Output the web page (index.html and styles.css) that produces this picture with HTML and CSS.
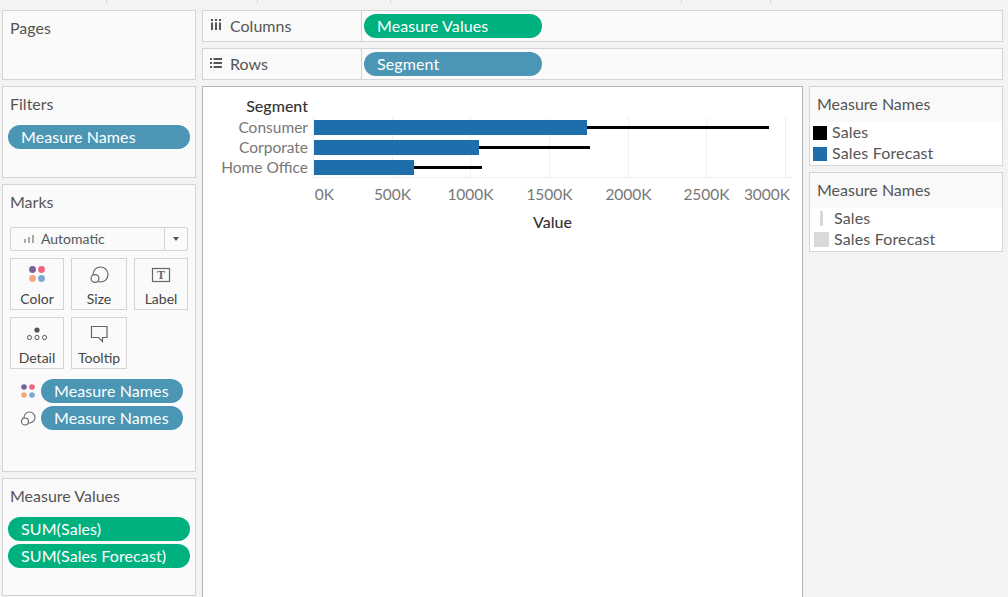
FILE: index.html
```html
<!DOCTYPE html>
<html lang="en">
<head>
<meta charset="utf-8">
<title>Sheet</title>
<link rel="stylesheet" href="styles.css">
</head>
<body>
<div class="ticks"><i class="t1"></i><i class="t2"></i><i class="t3"></i><i class="t4"></i><i class="t5"></i></div>
<div class="app">
  <aside class="left">
    <section class="card pages"><h2>Pages</h2></section>
    <section class="card filters"><h2>Filters</h2><div class="pill blue">Measure Names</div></section>
    <section class="card marks">
      <h2>Marks</h2>
      <div class="select">
        <svg class="auto-ic" width="10" height="8" viewBox="0 0 10 8"><path d="M0 4h2v4H0zM4 2h2v6H4zM8 0h2v8H8z" fill="#aaa"/></svg>
        <span class="select-text">Automatic</span>
        <span class="caret"></span>
      </div>
      <div class="mark-grid">
        <div class="mbtn">
          <svg width="24" height="24" viewBox="0 0 24 24"><circle cx="7.500" cy="7.500" r="3.400" fill="#7b6294"/><circle cx="16.500" cy="7.500" r="3.400" fill="#ef6480"/><circle cx="7.500" cy="16.500" r="3.400" fill="#f4a97d"/><circle cx="16.500" cy="16.500" r="3.400" fill="#7ba7d1"/></svg>
          <span>Color</span>
        </div>
        <div class="mbtn">
          <svg width="24" height="24" viewBox="0 0 24 24"><circle cx="13.500" cy="12.500" r="7.500" fill="none" stroke="#666" stroke-width="1.200"/><circle cx="8" cy="16.500" r="3.900" fill="#fafafa" stroke="#666" stroke-width="1.200"/></svg>
          <span>Size</span>
        </div>
        <div class="mbtn">
          <svg width="24" height="24" viewBox="0 0 24 24"><rect x="3.500" y="6.500" width="17" height="13" fill="none" stroke="#666" stroke-width="1.200"/><text x="12" y="17" text-anchor="middle" class="t-glyph">T</text></svg>
          <span>Label</span>
        </div>
        <div class="mbtn">
          <svg width="24" height="24" viewBox="0 0 24 24"><circle cx="12" cy="9" r="2.600" fill="#555"/><circle cx="4.500" cy="16.500" r="2.100" fill="none" stroke="#555"/><circle cx="12" cy="16.500" r="2.100" fill="none" stroke="#555"/><circle cx="19.500" cy="16.500" r="2.100" fill="none" stroke="#555"/></svg>
          <span>Detail</span>
        </div>
        <div class="mbtn">
          <svg width="24" height="24" viewBox="0 0 24 24"><path d="M4.500 5.500h15.500v11h-4.500v4l-3.800-4H4.500z" fill="none" stroke="#666" stroke-width="1.200"/></svg>
          <span>Tooltip</span>
        </div>
      </div>
      <div class="enc">
        <svg width="18" height="18" viewBox="0 0 18 18"><circle cx="5" cy="5" r="2.800" fill="#7b6294"/><circle cx="13" cy="5" r="2.800" fill="#ef6480"/><circle cx="5" cy="13" r="2.800" fill="#f4a97d"/><circle cx="13" cy="13" r="2.800" fill="#7ba7d1"/></svg>
        <div class="pill blue">Measure Names</div>
      </div>
      <div class="enc">
        <svg width="18" height="18" viewBox="0 0 18 18"><circle cx="10.500" cy="8.500" r="5.500" fill="none" stroke="#666" stroke-width="1.100"/><circle cx="6" cy="12.500" r="3.500" fill="#fafafa" stroke="#666" stroke-width="1.100"/></svg>
        <div class="pill blue">Measure Names</div>
      </div>
    </section>
    <section class="card values">
      <h2>Measure Values</h2>
      <div class="pill green">SUM(Sales)</div>
      <div class="pill green">SUM(Sales Forecast)</div>
    </section>
  </aside>
  <main class="main">
    <div class="shelf">
      <div class="shelf-head">
        <svg width="12" height="12" viewBox="0 0 12 12"><path d="M1 0h2v2H1zM5 0h2v2H5zM9 0h2v2H9zM1 3.500h2V11H1zM5 3.500h2V11H5zM9 3.500h2V11H9z" fill="#555"/></svg>
        <span>Columns</span>
      </div>
      <div class="shelf-body"><div class="pill green wide">Measure Values</div></div>
    </div>
    <div class="shelf">
      <div class="shelf-head">
        <svg width="12" height="12" viewBox="0 0 12 12"><path d="M0 1h2v2H0zM0 5h2v2H0zM0 9h2v2H0zM3.500 1H12v2H3.500zM3.500 5H12v2H3.500zM3.500 9H12v2H3.500z" fill="#555"/></svg>
        <span>Rows</span>
      </div>
      <div class="shelf-body"><div class="pill blue wide">Segment</div></div>
    </div>
    <div class="workspace">
      <div class="view">
        <svg class="chart" width="599" height="160" viewBox="203 87 599 160">
          <g stroke="#f0f0f0" fill="none">
            <path d="M313.500 117V177M392.500 117V177M470.500 117V177M549.500 117V177M628.500 117V177M706.500 117V177M785.500 117V177M313 177.500H792"/>
          </g>
          <g fill="#000">
            <rect x="314" y="126" width="455" height="3"/>
            <rect x="314" y="146" width="276" height="3"/>
            <rect x="314" y="166" width="168" height="3"/>
          </g>
          <g fill="#1f6eac">
            <rect x="314" y="120" width="273" height="15"/>
            <rect x="314" y="140" width="165" height="15"/>
            <rect x="314" y="160" width="100" height="15"/>
          </g>
          <text x="308" y="112" text-anchor="end" class="head">Segment</text>
          <g text-anchor="end" class="lab">
            <text x="308" y="133">Consumer</text>
            <text x="308" y="153">Corporate</text>
            <text x="308" y="173">Home Office</text>
          </g>
          <g text-anchor="middle" class="lab">
            <text x="324.500" y="200">0K</text>
            <text x="392.500" y="200">500K</text>
            <text x="470.500" y="200">1000K</text>
            <text x="549.500" y="200">1500K</text>
            <text x="628.500" y="200">2000K</text>
            <text x="706.500" y="200">2500K</text>
            <text x="767" y="200">3000K</text>
          </g>
          <text x="552.500" y="228" text-anchor="middle" class="head">Value</text>
        </svg>
      </div>
      <div class="legends">
        <section class="legend">
          <h2>Measure Names</h2>
          <ul>
            <li><i class="sw black"></i><span>Sales</span></li>
            <li><i class="sw steel"></i><span>Sales Forecast</span></li>
          </ul>
        </section>
        <section class="legend size">
          <h2>Measure Names</h2>
          <ul>
            <li><span class="slot"><i class="thin"></i></span><span>Sales</span></li>
            <li><span class="slot"><i class="fat"></i></span><span>Sales Forecast</span></li>
          </ul>
        </section>
      </div>
    </div>
  </main>
</div>
</body>
</html>
```
FILE: styles.css
```css
* { box-sizing: border-box; }
html, body { margin: 0; height: 597px; overflow: hidden; }
body {
  background: #f3f3f3;
  font-family: Lato, "Open Sans", sans-serif;
  font-size: 16px;
  color: #555;
}
h2 { margin: 0; font-size: 16px; font-weight: 400; color: #555; line-height: 20px; }

.ticks { height: 3px; display: flex; }
.ticks i { display: block; height: 3px; border-right: 1px solid #d4d4d4; }
.t1 { width: 107px; }
.t2 { width: 151px; }
.t3 { width: 133px; }
.t4 { width: 291px; }
.t5 { width: 89px; }

.app {
  display: grid;
  grid-template-columns: 194px 801px;
  column-gap: 6px;
  padding: 7px 0 0 2px;
}
.left { display: flex; flex-direction: column; gap: 6px; }
.card { background: #fafafa; border: 1px solid #d4d4d4; padding: 7px 5px 0 5px; }
.card h2 { padding-left: 2px; }
.pages { height: 70px; }
.filters { height: 92px; }
.filters h2 { margin-bottom: 11px; }
.marks { height: 288px; padding: 7px 7px 0 7px; }
.marks h2 { padding-left: 0; margin-bottom: 15px; }
.values { height: 118px; }
.values h2 { margin-bottom: 11px; }
.values .pill + .pill { margin-top: 3px; }

.pill {
  height: 24px;
  line-height: 24px;
  border-radius: 12px;
  padding-left: 13px;
  color: #fff;
  font-size: 16px;
  letter-spacing: 0.1px;
  white-space: nowrap;
}
.blue { background: #4b96b4; }
.green { background: #00b180; }
.wide { width: 178px; }

.select {
  display: flex;
  align-items: center;
  height: 24px;
  width: 178px;
  background: #fafafa;
  border: 1px solid #d4d4d4;
  border-radius: 2px;
}
.auto-ic { margin-left: 13px; }
.select-text { margin: 0 0 2px 7px; font-size: 14px; flex: 1; }
.caret {
  width: 23px;
  height: 22px;
  border-left: 1px solid #d4d4d4;
  display: flex;
  align-items: center;
  justify-content: center;
}
.caret::after {
  content: "";
  border-left: 3.500px solid transparent;
  border-right: 3.500px solid transparent;
  border-top: 4px solid #555;
}

.mark-grid {
  display: grid;
  grid-template-columns: 54px 56px 54px;
  grid-auto-rows: 52px;
  gap: 7px;
  margin-top: 7px;
}
.mbtn {
  border: 1px solid #d4d4d4;
  display: flex;
  flex-direction: column;
  align-items: center;
  padding-top: 3px;
  font-size: 14px;
  color: #444;
  line-height: 18px;
}
.mbtn svg { display: block; margin-bottom: 4px; }
.t-glyph { font-family: "Liberation Serif", serif; font-size: 12px; font-weight: 700; fill: #666; }

.enc { display: flex; align-items: center; margin-top: 3px; }
.mark-grid + .enc { margin-top: 10px; }
.enc svg { margin-left: 9px; margin-right: 4px; flex: none; }
.enc .pill { width: 142px; }

.main { display: flex; flex-direction: column; gap: 6px; }
.shelf { display: flex; height: 32px; width: 801px; background: #fafafa; border: 1px solid #d4d4d4; }
.shelf-head {
  width: 159px;
  border-right: 1px solid #d4d4d4;
  display: flex;
  align-items: center;
  gap: 8px;
  padding-left: 7px;
  font-size: 16px;
}
.shelf-head span { margin-bottom: 2px; }
.shelf-head svg { margin-bottom: 2px; }
.shelf-body { padding: 3px 0 0 2px; }

.workspace { display: flex; gap: 6px; }
.view {
  width: 601px;
  height: 520px;
  background: #fff;
  border: 1px solid #b4b4b4;
}
.chart { display: block; }
.lab text { font-family: Lato, "Open Sans", sans-serif; font-size: 15.500px; fill: #777; }
.head { font-family: Lato, "Open Sans", sans-serif; font-size: 16px; font-weight: 500; fill: #333; }

.legends { width: 194px; display: flex; flex-direction: column; gap: 6px; }
.legend { height: 80px; background: #fff; border: 1px solid #d4d4d4; }
.legend h2 { height: 35px; padding: 7px 0 0 7px; background: #f9f9f9; line-height: 20px; }
.legend ul { list-style: none; margin: 0; padding: 0; }
.legend li {
  display: flex;
  align-items: center;
  height: 21px;
  font-size: 16px;
  letter-spacing: 0.15px;
  padding-left: 3px;
  color: #555;
}
.legend li span:last-child { margin-bottom: 2px; }
.sw { display: block; width: 14px; height: 14px; margin-right: 5px; }
.black { background: #000; }
.steel { background: #1f6eac; }
.slot { width: 17px; display: flex; align-items: center; justify-content: center; margin-right: 4px; }
.thin { display: block; width: 3px; height: 15px; background: #d9d9d9; }
.fat { display: block; width: 15px; height: 15px; background: #d9d9d9; }
```
